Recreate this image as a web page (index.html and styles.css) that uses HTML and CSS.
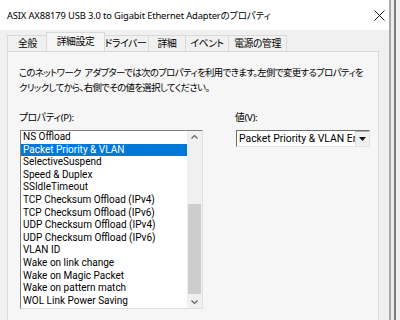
FILE: index.html
```html
<!DOCTYPE html>
<html lang="ja">
    <head>
        <meta charset="utf-8">
        <title>ASIX AX88179 USB 3.0 to Gigabit Ethernet Adapterのプロパティ</title>
        <link rel="stylesheet" href="styles.css">
    </head>
    <body>
        <div class="screen">
            <div class="dialog">
                <!-- Title bar -->
                <div class="titlebar">
                    <span class="title">ASIX AX88179 USB 3.0 to Gigabit Ethernet Adapterのプロパティ</span>
                    <svg class="close" width="11" height="11" viewBox="0 0 11 11">
                        <path d="M0.5 0.5 L10.5 10.5 M10.5 0.5 L0.5 10.5" stroke="#1a1a1a" stroke-width="1" fill="none"/>
                    </svg>
                </div>

                <!-- Tabs -->
                <ul class="tabs">
                    <li class="tab tab-general">全般</li>
                    <li class="tab tab-advanced active">詳細設定</li>
                    <li class="tab tab-driver">ドライバー</li>
                    <li class="tab tab-details">詳細</li>
                    <li class="tab tab-events">イベント</li>
                    <li class="tab tab-power">電源の管理</li>
                </ul>

                <!-- Tab page -->
                <div class="page">
                    <p class="intro">このネットワーク アダプターでは次のプロパティを利用できます。左側で変更するプロパティを<br>クリックしてから、右側でその値を選択してください。</p>

                    <div class="fields">
                        <div class="field-props">
                            <div class="label">プロパティ(P):</div>
                            <div class="listbox">
                                <ul class="options">
                                    <li>NS Offload</li>
                                    <li class="selected">Packet Priority &amp; VLAN</li>
                                    <li>SelectiveSuspend</li>
                                    <li>Speed &amp; Duplex</li>
                                    <li>SSIdleTimeout</li>
                                    <li>TCP Checksum Offload (IPv4)</li>
                                    <li>TCP Checksum Offload (IPv6)</li>
                                    <li>UDP Checksum Offload (IPv4)</li>
                                    <li>UDP Checksum Offload (IPv6)</li>
                                    <li>VLAN ID</li>
                                    <li>Wake on link change</li>
                                    <li>Wake on Magic Packet</li>
                                    <li>Wake on pattern match</li>
                                    <li>WOL Link Power Saving</li>
                                </ul>
                                <div class="scrollbar">
                                    <svg class="arrow" width="15" height="12" viewBox="0 0 15 12">
                                        <path d="M4.5 7.5 L7.5 4.5 L10.5 7.5" stroke="#606060" stroke-width="1.2" fill="none"/>
                                    </svg>
                                    <div class="track"><div class="thumb"></div></div>
                                    <svg class="arrow" width="15" height="12" viewBox="0 0 15 12">
                                        <path d="M4.5 4.5 L7.5 7.5 L10.5 4.5" stroke="#606060" stroke-width="1.2" fill="none"/>
                                    </svg>
                                </div>
                            </div>
                        </div>

                        <div class="field-value">
                            <div class="label">値(V):</div>
                            <div class="combo">
                                <span class="combo-text">Packet Priority &amp; VLAN Enabled</span>
                                <span class="combo-button">
                                    <svg width="7" height="4" viewBox="0 0 7 4"><path d="M0 0 L7 0 L3.5 4 Z" fill="#111"/></svg>
                                </span>
                            </div>
                        </div>
                    </div>
                </div>
            </div>
            <div class="edge-inner"></div>
            <div class="edge-outer"></div>
        </div>
    </body>
</html>
```

FILE: styles.css
```css
body { margin: 0; background: #f0f0f0; font-family: "Noto Sans", "Noto Sans CJK JP", sans-serif; font-size: 9.7px; color: #000; }

.screen { display: flex; height: 320px; overflow: hidden; }
.dialog { width: 389px; flex: none; background: #f0f0f0; }
.edge-inner { width: 3px; border-left: 2px solid #a8a8a8; background: #ececec; }
.edge-outer { width: 4px; border-left: 2px solid #7c7c7c; background: #f0f0f0; }

/* Title bar */
.titlebar {
    height: 30px;
    background: #ffffff;
    display: flex;
    align-items: center;
    justify-content: space-between;
    padding: 0 4px 0 7px;
}
.title { font-size: 9.4px; letter-spacing: -0.15px; font-feature-settings: "palt"; }

/* Tabs */
.tabs { list-style: none; margin: 0; padding: 5px 0 0 7px; display: flex; align-items: flex-end; height: 16px; }
.tab {
    font-family: "Noto Sans CJK JP", sans-serif;
    font-size: 9.8px;
    font-feature-settings: "palt";
    letter-spacing: -0.4px;
    height: 15px;
    line-height: 15px;
    border: 1px solid #d9d9d9;
    border-bottom: none;
    border-left: none;
    background: #f0f0f0;
    text-align: center;
    white-space: nowrap;
}
.tab-general { width: 39px; border-left: 1px solid #d9d9d9; }
.tab-advanced { width: 53px; }
.tab-driver { width: 45px; }
.tab-details { width: 36px; }
.tab-events { width: 42px; }
.tab-power { width: 57px; }
.tab.active {
    height: 18px;
    line-height: 16px;
    margin: 0 -2px 0 -2px;
    padding: 0 2px;
    border-left: 1px solid #d9d9d9;
    background: #f6f6f6;
    position: relative;
    z-index: 1;
}

/* Tab page */
.page {
    margin-left: 7px;
    width: 359px;
    height: 280px;
    border: 1px solid #d9d9d9;
    background: #f6f6f6;
    padding: 13px 0 0 11px;
}
.intro {
    margin: 0;
    font-family: "Noto Sans CJK JP", sans-serif;
    font-feature-settings: "palt";
    font-size: 9.4px;
    letter-spacing: -0.6px;
    word-spacing: 2px;
    line-height: 15px;
    white-space: nowrap;
}

.fields { display: flex; margin-top: 16px; }
.field-props { width: 183px; margin-left: 1px; }
.field-value { margin-left: 33px; width: 134px; }
.label { font-feature-settings: "palt"; letter-spacing: -0.3px; height: 13px; line-height: 13px; margin-left: -1px; }

/* Property list */
.listbox {
    display: flex;
    margin-top: 6px;
    height: 177px;
    border: 1px solid #7f7f7f;
    border-right-color: #e0e0e0;
    border-bottom-color: #e0e0e0;
    background: #ffffff;
}
.options { list-style: none; margin: 0; padding: 0; flex: 1; font-family: Roboto, "Noto Sans", sans-serif; font-size: 10px; }
.options li { height: 12.6px; line-height: 12.6px; padding-left: 2px; white-space: nowrap; }
.options li.selected { background: #0078d7; color: #ffffff; }

.scrollbar { width: 15px; background: #f0f0f0; display: flex; flex-direction: column; }
.arrow { display: block; flex: none; }
.track { flex: 1; padding-top: 61px; padding-bottom: 2px; display: flex; flex-direction: column; }
.thumb { margin: 0 1px; flex: 1; background: #cdcdcd; }

/* Value combo box */
.combo {
    display: flex;
    margin-top: 6px;
    height: 15px;
    border: 1px solid #6e6e6e;
    border-right-color: #e3e3e3;
    border-bottom-color: #e3e3e3;
    background: #ffffff;
}
.combo-text { flex: 1; overflow: hidden; white-space: nowrap; line-height: 15px; padding-left: 2px; font-family: Roboto, "Noto Sans", sans-serif; font-size: 10.4px; }
.combo-button {
    width: 13px;
    border-left: 1px solid #dcdcdc;
    border-top: 1px solid #b0b0b0;
    background: #f0f0f0;
    display: flex;
    align-items: center;
    justify-content: center;
}
```
